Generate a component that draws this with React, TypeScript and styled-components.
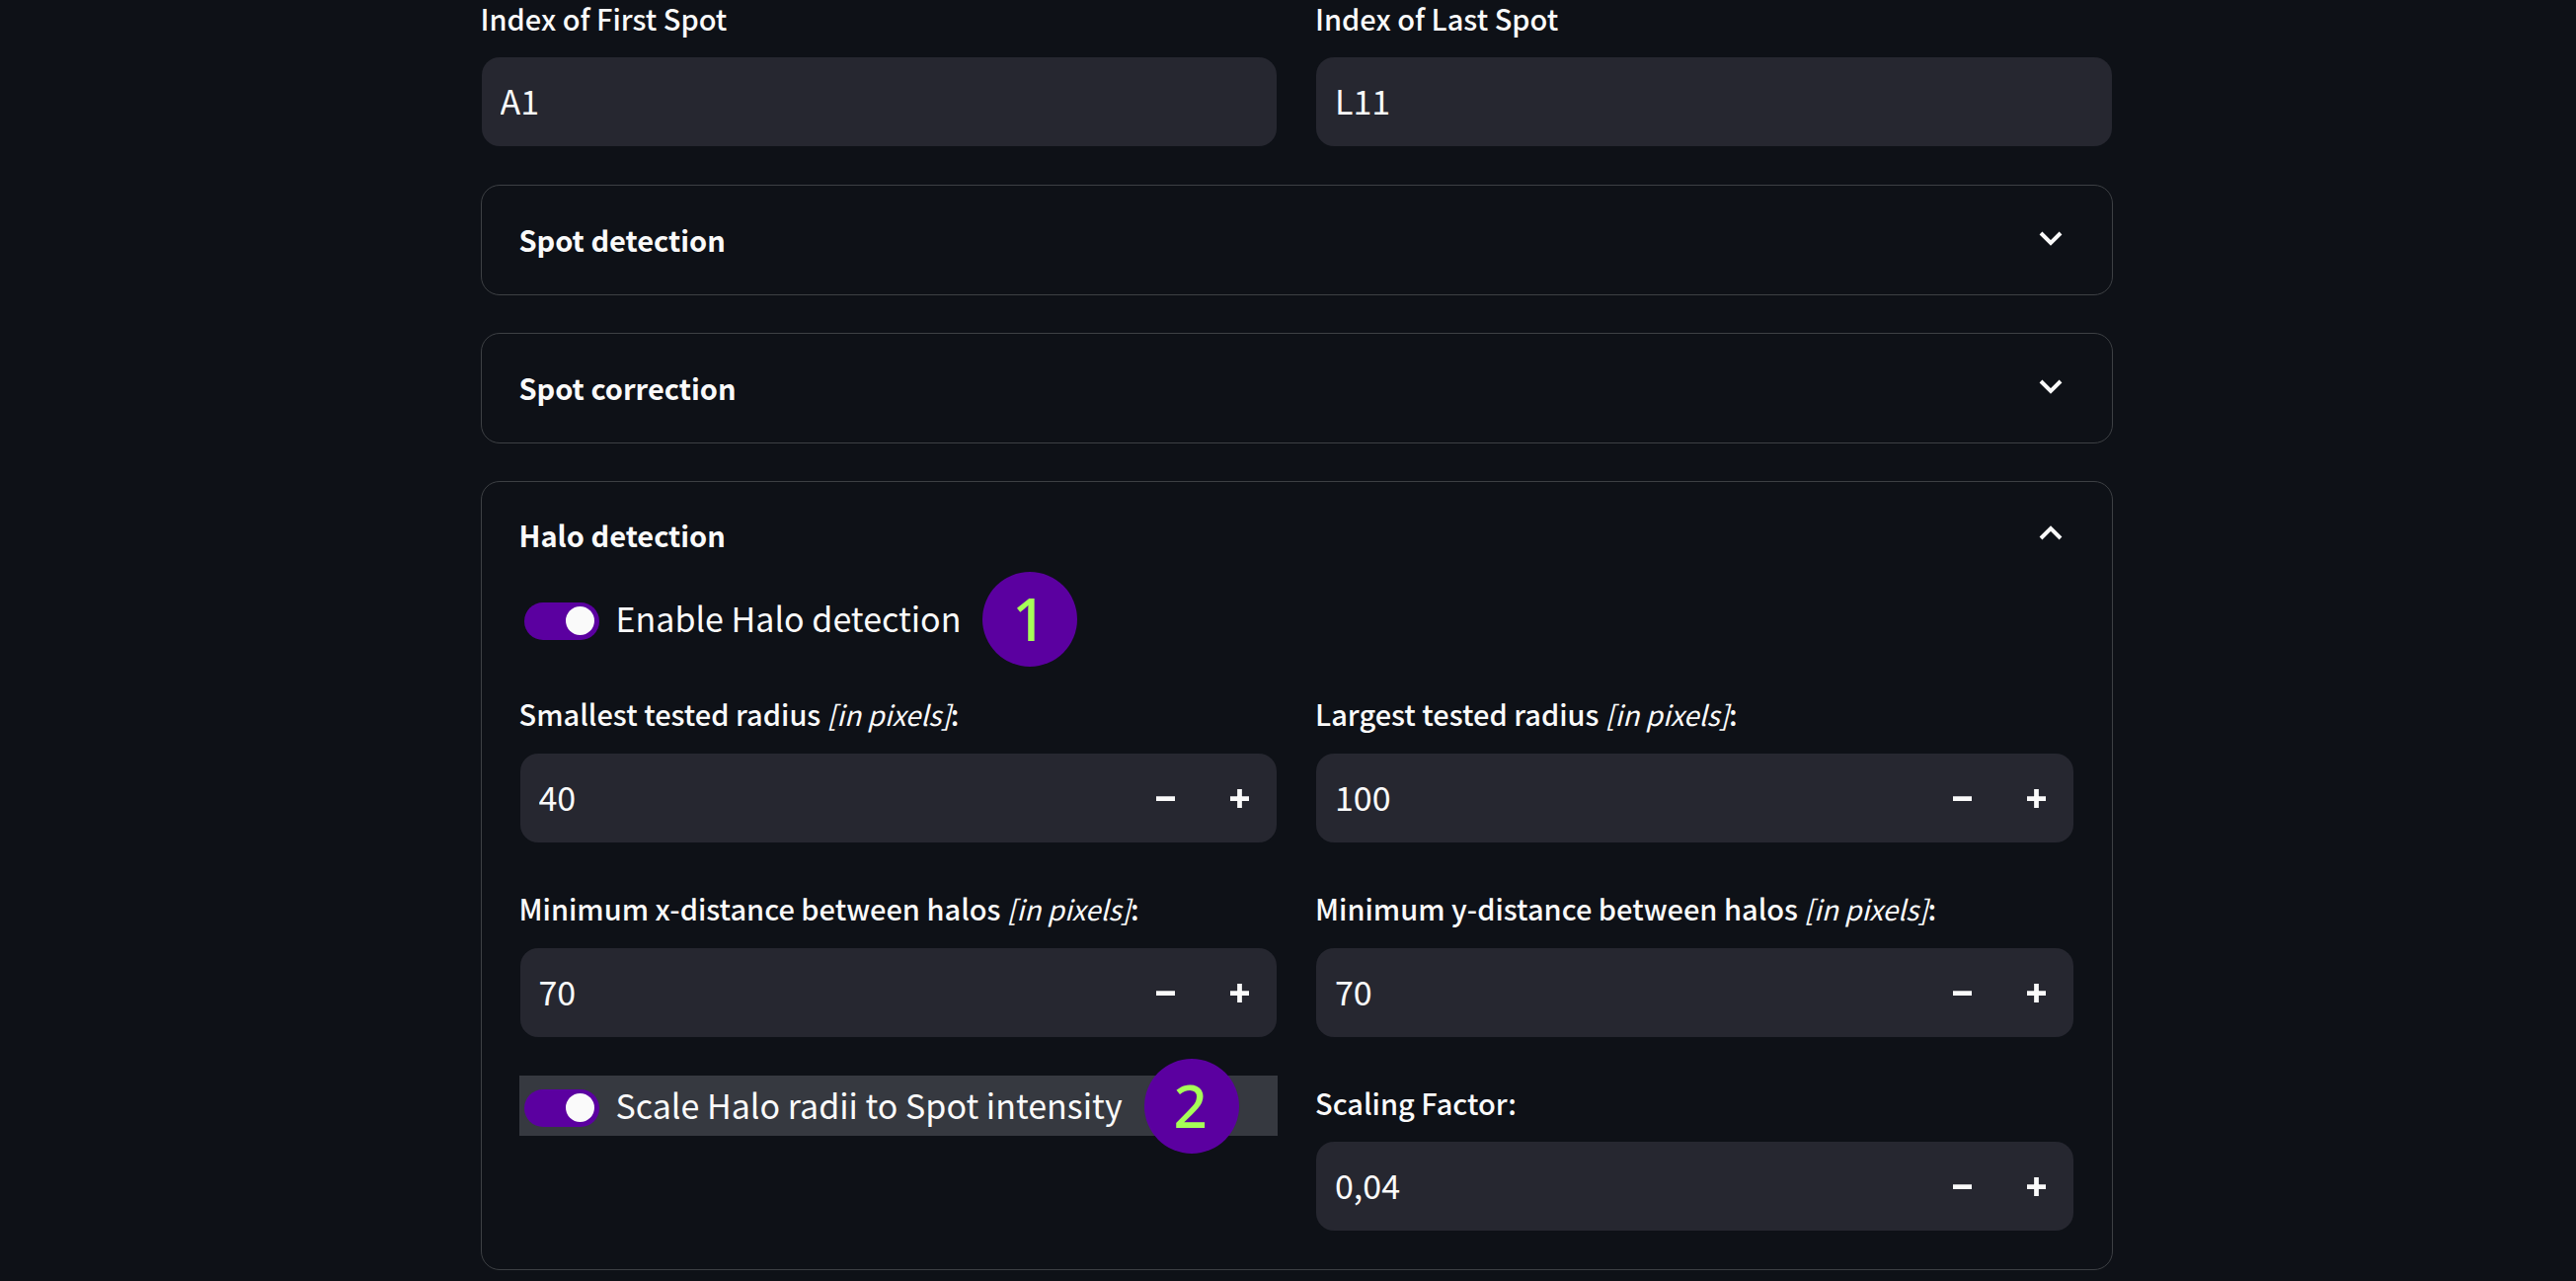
import React, { useState } from "react";
import styled, { createGlobalStyle } from "styled-components";

const GlobalStyle = createGlobalStyle`
  *, *::before, *::after { box-sizing: border-box; }
  body {
    margin: 0;
    background: #0e1117;
    color: #fafafa;
    font-family: "Noto Sans CJK SC", "Noto Sans", sans-serif;
    overflow: hidden;
  }
  button, input { font: inherit; color: inherit; }
`;

const Page = styled.main`
  min-height: 100vh;
  margin-top: -9px;
  padding-left: 17px;
`;

const Content = styled.form`
  display: flex;
  flex-direction: column;
  gap: 38px;
  max-width: 1653px;
  margin: 0 auto;
`;

const Columns = styled.div`
  display: grid;
  grid-template-columns: 1fr 1fr;
  gap: 38px;
`;

const Field = styled.div`
  display: flex;
  flex-direction: column;
  min-width: 0;
`;

const FieldLabel = styled.label`
  margin-bottom: 12px;
  font-size: 29px;
  font-weight: 500;
  line-height: 54px;
  white-space: nowrap;
`;

const Unit = styled.em`
  font-size: 28px;
  font-weight: 400;
`;

const InputBox = styled.div`
  display: flex;
  height: 92px;
  border: 1px solid transparent;
  border-radius: 19px;
  background: #262730;
  background-clip: padding-box;
  overflow: hidden;
`;

const TextBox = styled.input`
  flex: 1;
  min-width: 0;
  padding: 0 19px 4px;
  border: 0;
  outline: 0;
  background: transparent;
  font-size: 34px;
`;

const StepButton = styled.button`
  display: flex;
  align-items: center;
  justify-content: center;
  width: 75px;
  padding: 0;
  border: 0;
  background: transparent;
  cursor: pointer;
`;

const Panel = styled.section`
  border: 1px solid #3d4044;
  border-radius: 19px;
`;

const PanelHeader = styled.button<{ $open: boolean }>`
  display: flex;
  align-items: center;
  justify-content: space-between;
  width: 100%;
  height: ${(p) => (p.$open ? 108 : 110)}px;
  padding: 0 38px 2px;
  border: 0;
  background: transparent;
  font-size: 29px;
  font-weight: 600;
  cursor: pointer;
`;

const PanelBody = styled.div`
  display: flex;
  flex-direction: column;
  gap: 38px;
  padding: 0 38px 38px;
`;

const ToggleRow = styled.div<{ $highlight?: boolean }>`
  display: flex;
  align-items: center;
  align-self: start;
  width: 100%;
  height: 61px;
  background: ${(p) => (p.$highlight ? "#363940" : "transparent")};
`;

const Switch = styled.input`
  appearance: none;
  display: flex;
  align-items: center;
  justify-content: flex-end;
  width: 76px;
  height: 38px;
  margin: 4px 0 0 5px;
  padding: 0 5px;
  border-radius: 19px;
  background: #5b00a0;
  cursor: pointer;

  &::before {
    content: "";
    width: 29px;
    height: 29px;
    border-radius: 50%;
    background: #fafafa;
  }

  &:not(:checked) {
    justify-content: flex-start;
    background: #262730;
  }
`;

const ToggleLabel = styled.label`
  padding: 0 0 2px 17px;
  font-size: 34px;
  line-height: 58px;
  white-space: nowrap;
`;

const Badge = styled.span`
  display: flex;
  align-items: center;
  justify-content: center;
  width: 96px;
  height: 96px;
  margin: -18px 0 -18px 22px;
  padding: 0 2px 2px 0;
  border-radius: 50%;
  background: #5b00a0;
  color: #a6ff57;
  font-family: "Noto Sans", "Open Sans", sans-serif;
  font-size: 60px;
  font-weight: 500;
  line-height: 94px;
`;

function Chevron({ up = false }: { up?: boolean }) {
  return (
    <svg width="48" height="48" viewBox="0 0 48 48" fill="none" stroke="currentColor" strokeWidth="4" aria-hidden="true">
      <path d={up ? "M14 28 24 18l10 10" : "M14 18l10 10 10-10"} />
    </svg>
  );
}

function MinusIcon() {
  return (
    <svg width="19" height="19" viewBox="0 0 8 8" fill="currentColor" aria-hidden="true">
      <path d="M0 3v2h8V3z" />
    </svg>
  );
}

function PlusIcon() {
  return (
    <svg width="19" height="19" viewBox="0 0 8 8" fill="currentColor" aria-hidden="true">
      <path d="M3 0v3H0v2h3v3h2V5h3V3H5V0z" />
    </svg>
  );
}

function TextField({ id, label, initial }: { id: string; label: string; initial: string }) {
  const [value, setValue] = useState(initial);
  return (
    <Field>
      <FieldLabel htmlFor={id}>{label}</FieldLabel>
      <InputBox>
        <TextBox id={id} value={value} onChange={(e) => setValue(e.target.value)} />
      </InputBox>
    </Field>
  );
}

interface NumberFieldProps {
  id: string;
  label: string;
  unit?: string;
  initial: number;
  step?: number;
  digits?: number;
}

function NumberField({ id, label, unit, initial, step = 1, digits = 0 }: NumberFieldProps) {
  const format = (n: number) => n.toFixed(digits).replace(".", ",");
  const [text, setText] = useState(format(initial));
  const change = (delta: number) => {
    const current = parseFloat(text.replace(",", ".")) || 0;
    setText(format(current + delta));
  };
  return (
    <Field>
      <FieldLabel htmlFor={id}>
        {label}
        {unit && (
          <>
            {" "}
            <Unit>[{unit}]</Unit>
          </>
        )}
        :
      </FieldLabel>
      <InputBox>
        <TextBox id={id} inputMode="decimal" value={text} onChange={(e) => setText(e.target.value)} />
        <StepButton type="button" aria-label="Decrease" onClick={() => change(-step)}>
          <MinusIcon />
        </StepButton>
        <StepButton type="button" aria-label="Increase" onClick={() => change(step)}>
          <PlusIcon />
        </StepButton>
      </InputBox>
    </Field>
  );
}

interface ToggleProps {
  id: string;
  label: string;
  badge: string;
  highlight?: boolean;
}

function Toggle({ id, label, badge, highlight }: ToggleProps) {
  const [on, setOn] = useState(true);
  return (
    <ToggleRow $highlight={highlight}>
      <Switch id={id} type="checkbox" role="switch" checked={on} onChange={(e) => setOn(e.target.checked)} />
      <ToggleLabel htmlFor={id}>{label}</ToggleLabel>
      <Badge>{badge}</Badge>
    </ToggleRow>
  );
}

interface ExpanderProps {
  title: string;
  defaultOpen?: boolean;
  children?: React.ReactNode;
}

function Expander({ title, defaultOpen = false, children }: ExpanderProps) {
  const [open, setOpen] = useState(defaultOpen);
  return (
    <Panel>
      <PanelHeader type="button" $open={open} aria-expanded={open} onClick={() => setOpen(!open)}>
        <span>{title}</span>
        <Chevron up={open} />
      </PanelHeader>
      {open && children && <PanelBody>{children}</PanelBody>}
    </Panel>
  );
}

export default function App() {
  return (
    <>
      <GlobalStyle />
      <Page>
        <Content>
          <Columns>
            <TextField id="first-spot" label="Index of First Spot" initial="A1" />
            <TextField id="last-spot" label="Index of Last Spot" initial="L11" />
          </Columns>
          <Expander title="Spot detection" />
          <Expander title="Spot correction" />
          <Expander title="Halo detection" defaultOpen>
            <Toggle id="enable-halo" label="Enable Halo detection" badge="1" />
            <Columns>
              <NumberField id="min-radius" label="Smallest tested radius" unit="in pixels" initial={40} />
              <NumberField id="max-radius" label="Largest tested radius" unit="in pixels" initial={100} />
              <NumberField id="min-x" label="Minimum x-distance between halos" unit="in pixels" initial={70} />
              <NumberField id="min-y" label="Minimum y-distance between halos" unit="in pixels" initial={70} />
              <Toggle id="scale-halo" label="Scale Halo radii to Spot intensity" badge="2" highlight />
              <NumberField id="scaling" label="Scaling Factor" initial={0.04} step={0.01} digits={2} />
            </Columns>
          </Expander>
        </Content>
      </Page>
    </>
  );
}
